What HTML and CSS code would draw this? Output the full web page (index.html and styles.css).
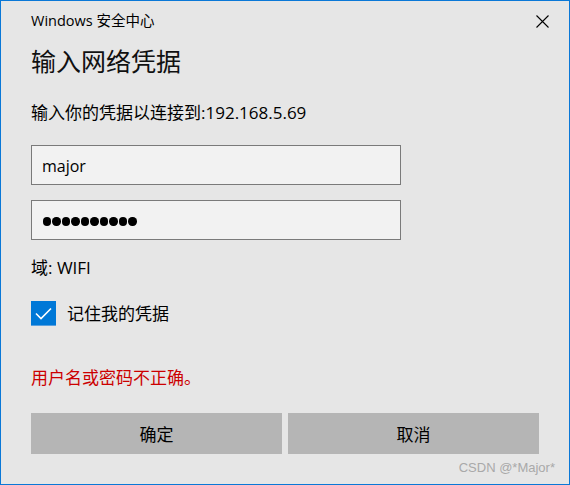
FILE: index.html
```html
<!DOCTYPE html>
<html lang="zh-CN">
<head>
<meta charset="utf-8">
<title>Windows 安全中心</title>
<link rel="stylesheet" href="styles.css">
</head>
<body>
<div class="window">
  <div class="titlebar">
    <span class="app-title">Windows 安全中心</span>
    <span class="close" aria-label="关闭">
      <svg width="13" height="13" viewBox="0 0 13 13"><path d="M0.5 0.5 L12.5 12.5 M12.5 0.5 L0.5 12.5" stroke="#000" stroke-width="1.1" fill="none"/></svg>
    </span>
  </div>
  <div class="content">
    <h1 class="heading">输入网络凭据</h1>
    <p class="subtitle">输入你的凭据以连接到:192.168.5.69</p>
    <div class="field"><span class="field-text">major</span></div>
    <div class="field field-pw">
      <span class="dots"><i></i><i></i><i></i><i></i><i></i><i></i><i></i><i></i><i></i><i></i></span>
    </div>
    <p class="domain">域: WIFI</p>
    <div class="remember">
      <span class="checkbox">
        <svg width="25" height="25" viewBox="0 0 25 25"><path d="M5 12.5 L10 17.5 L20 7.5" stroke="#fff" stroke-width="1.6" fill="none"/></svg>
      </span>
      <span class="remember-label">记住我的凭据</span>
    </div>
    <p class="error">用户名或密码不正确。</p>
    <div class="buttons">
      <button class="btn">确定</button>
      <button class="btn">取消</button>
    </div>
    <div class="watermark">CSDN @*Major*</div>
  </div>
</div>
</body>
</html>
```
FILE: styles.css
```css
* { box-sizing: border-box; }
html, body { margin: 0; padding: 0; }
body {
  width: 570px;
  height: 485px;
  overflow: hidden;
  font-family: "Open Sans", "Noto Sans CJK SC", sans-serif;
  color: #000;
}
.window {
  width: 570px;
  height: 485px;
  background: #e6e6e6;
  border: 1px solid #0a78d7;
}
.titlebar {
  height: 40px;
  display: flex;
  align-items: center;
  justify-content: space-between;
  padding: 0 20px 0 30px;
}
.app-title {
  font-size: 14.5px;
  line-height: 20px;
  color: #000;
}
.close {
  display: flex;
  width: 13px;
  height: 13px;
  margin-top: 1px;
}
.content {
  padding: 0 14px 0 30px;
}
.heading {
  margin: 2px 0 0 0;
  font-size: 25px;
  line-height: 34px;
  font-weight: normal;
  font-family: "Noto Sans CJK SC", sans-serif;
  color: #111;
}
.subtitle {
  margin: 24px 0 0 0;
  font-size: 17px;
  line-height: 24px;
}
.field {
  width: 370px;
  height: 40px;
  margin-top: 20px;
  background: #f2f2f2;
  border: 1px solid #7a7a7a;
  display: flex;
  align-items: center;
  padding-left: 10px;
}
.field-pw {
  margin-top: 15px;
  padding-left: 11px;
}
.field-text {
  font-size: 16px;
  line-height: 22px;
  margin-top: 1px;
}
.dots {
  display: flex;
  gap: 1.2px;
  margin-top: 3px;
}
.dots i {
  display: block;
  width: 8.3px;
  height: 8.3px;
  border-radius: 50%;
  background: #000;
}
.domain {
  margin: 16px 0 0 0;
  font-size: 17px;
  line-height: 24px;
}
.remember {
  margin-top: 21px;
  display: flex;
  align-items: center;
  height: 25px;
}
.checkbox {
  display: flex;
  width: 25px;
  height: 25px;
  background: #0078d7;
  border-bottom: 1px solid #5aa0de;
}
.remember-label {
  margin-left: 11px;
  font-size: 17px;
  line-height: 24px;
}
.error {
  margin: 40px 0 0 0;
  font-size: 17px;
  line-height: 24px;
  color: #cc0000;
}
.buttons {
  margin-top: 23px;
  width: 508px;
  display: flex;
  gap: 6px;
}
.btn {
  flex: 1;
  height: 41px;
  border: none;
  background: #b5b5b5;
  font-family: "Open Sans", "Noto Sans CJK SC", sans-serif;
  font-size: 17px;
  color: #000;
  padding: 0;
}
.watermark {
  margin-top: 6px;
  text-align: right;
  font-family: "Liberation Sans", sans-serif;
  font-size: 13px;
  line-height: 16px;
  color: #a9a9a9;
}
```
